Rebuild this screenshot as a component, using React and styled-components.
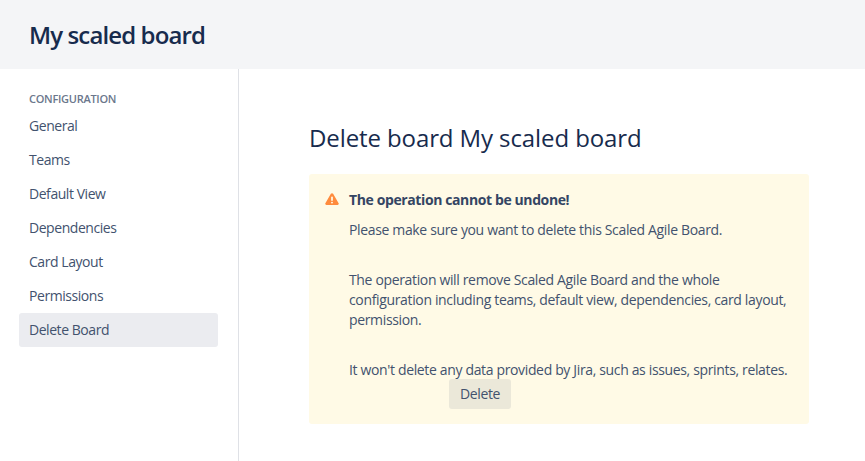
import React from "react";
import styled, { createGlobalStyle } from "styled-components";

const Global = createGlobalStyle`
  html, body { margin: 0; padding: 0; background: #fff; }
  body { font-family: "Open Sans", "Noto Sans", "Liberation Sans", sans-serif; font-size: 14px; line-height: 20px; color: #42526E; }
  * { box-sizing: border-box; }
`;
const Page = styled.div`display: flex; flex-direction: column; height: 461px; overflow: hidden;`;
const Header = styled.header`height: 69px; background: #F4F5F7; padding: 0 29px; display: flex; align-items: center; flex: none;`;
const BoardTitle = styled.h1`margin: 0; font-size: 24px; line-height: 32px; font-weight: 600; color: #172B4D; letter-spacing: -0.88px;`;
const Body = styled.div`display: flex; flex: 1; min-height: 0;`;
const Sidebar = styled.nav`width: 239px; flex: none; border-right: 1px solid #DFE1E6; padding: 22px 20px 0 19px;`;
const SectionLabel = styled.div`font-size: 11px; line-height: 16px; font-weight: 600; color: #6B778C; text-transform: uppercase; padding-left: 10px; margin-bottom: 2px; letter-spacing: -0.28px;`;
const NavItem = styled.a`display: flex; align-items: center; height: 34px; padding: 0 10px; border-radius: 3px; letter-spacing: -0.45px; color: #42526E; background: ${p => p.$active ? "#EBECF0" : "transparent"};`;
const Main = styled.main`flex: 1; padding: 53px 0 0 70px;`;
const PageTitle = styled.h2`margin: 0 0 20px; font-size: 24px; line-height: 32px; font-weight: 400; color: #172B4D; letter-spacing: -0.1px;`;
const Warning = styled.section`width: 500px; height: 250px; background: #FFFAE6; border-radius: 3px; padding: 16px; display: flex; gap: 10px;`;
const IconBox = styled.div`width: 14px; flex: none; padding-top: 3px; display: flex; justify-content: center; align-items: flex-start;`;
const Content = styled.div`flex: 1; letter-spacing: -0.35px;`;
const WarningTitle = styled.div`font-weight: 700; color: #344563; margin-bottom: 10px; letter-spacing: -0.39px;`;
const Para = styled.p`margin: 0 0 30px; &:last-of-type { margin-bottom: -1px; }`;
const DeleteButton = styled.button`display: block; margin-left: 100px; height: 30px; width: 62px; padding: 0; border: 0; border-radius: 3px; background: #EBE8D9; font: inherit; letter-spacing: -0.36px; color: #42526E;`;

const items = ["General", "Teams", "Default View", "Dependencies", "Card Layout", "Permissions", "Delete Board"];

export default function App() {
  return (
    <Page>
      <Global />
      <Header><BoardTitle>My scaled board</BoardTitle></Header>
      <Body>
        <Sidebar>
          <SectionLabel>Configuration</SectionLabel>
          {items.map(i => <NavItem key={i} $active={i === "Delete Board"}>{i}</NavItem>)}
        </Sidebar>
        <Main>
          <PageTitle>Delete board My scaled board</PageTitle>
          <Warning>
            <IconBox>
              <svg width="14" height="12" viewBox="0 0 16 14" preserveAspectRatio="none" style={{ flex: "none" }}>
                <path d="M6.7 1 .6 11.6A1.5 1.5 0 0 0 1.9 14h12.2a1.5 1.5 0 0 0 1.3-2.4L9.3 1a1.5 1.5 0 0 0-2.6 0Z" fill="#FF8B3D" />
                <rect x="7" y="4" width="2" height="5.2" rx="1" fill="#FFFAE6" />
                <circle cx="8" cy="11.2" r="1.1" fill="#FFFAE6" />
              </svg>
            </IconBox>
            <Content>
              <WarningTitle>The operation cannot be undone!</WarningTitle>
              <Para>Please make sure you want to delete this Scaled Agile Board.</Para>
              <Para>The operation will remove Scaled Agile Board and the whole configuration including teams, default view, dependencies, card layout, permission.</Para>
              <Para>It won't delete any data provided by Jira, such as issues, sprints, relates.</Para>
              <DeleteButton>Delete</DeleteButton>
            </Content>
          </Warning>
        </Main>
      </Body>
    </Page>
  );
}
